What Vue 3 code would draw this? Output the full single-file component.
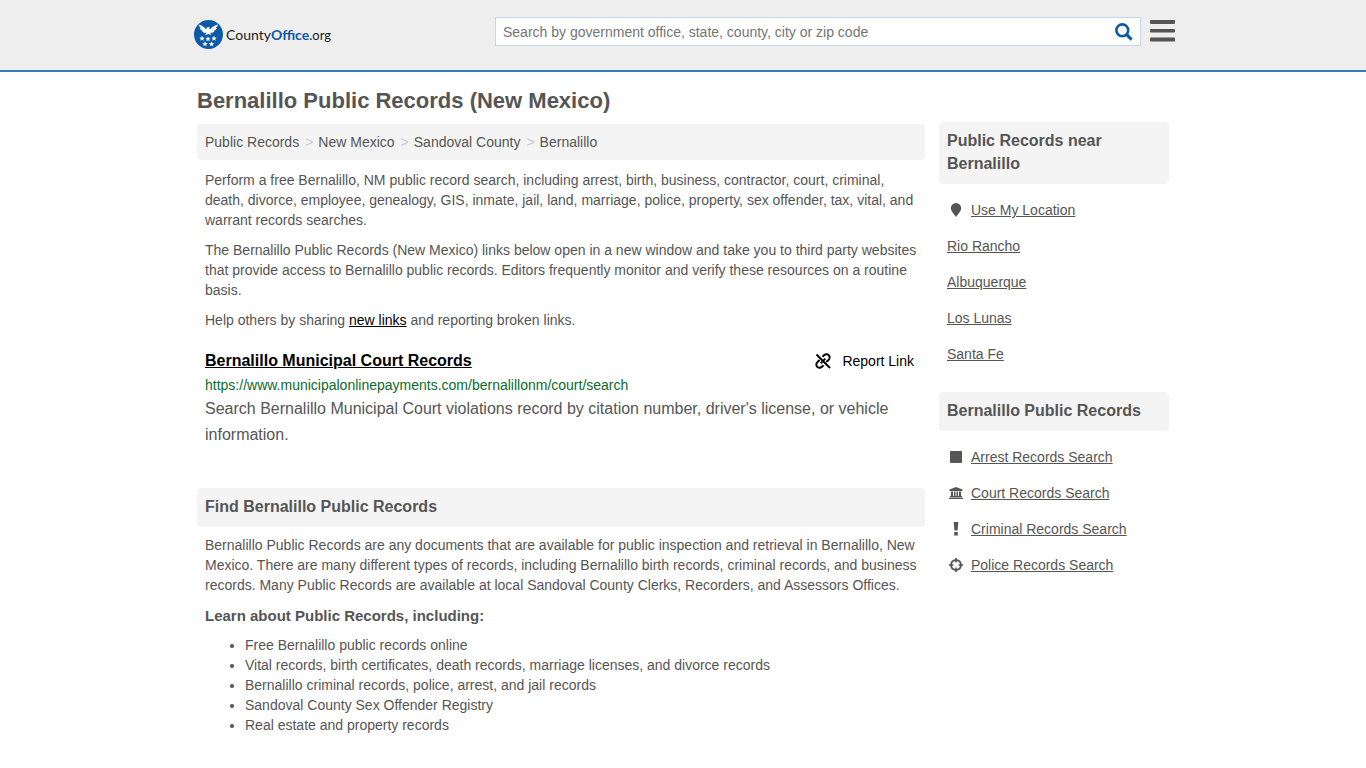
<template>
    <div class="page">
        <header class="site-header">
            <div class="header-inner">
                <a href="#" class="logo">
                    <svg class="logo-mark" viewBox="0 0 58 58" aria-hidden="true">
                        <circle cx="29" cy="29" r="29" fill="#0c59a8" />
                        <path
                            d="M9 9C16 11 21 14 24 19L25 16L28 14L32 15L30 17L32 19C36 14 41 11 48 9C47 12 46 14 43 16L46 16C44 19 42 21 39 22L41 23C38 26 35 26 32 25L35 30L29 28L22 30L25 25C22 26 19 26 16 23L18 22C15 21 13 19 11 16L14 16C11 14 10 12 9 9Z"
                            fill="#fff"
                        />
                        <path v-for="star in stars" :key="star" :transform="star" d="M0-5.500L1.400-1.800L5.500-1.700L2.300.8L3.400 4.700L0 2.400L-3.400 4.700L-2.300.8L-5.500-1.700L-1.400-1.800Z" fill="#fff" />
                    </svg>
                    <span class="logo-text">County<b>Office</b><span class="logo-org">.org</span></span>
                </a>
                <form class="search" role="search" @submit.prevent>
                    <input v-model="query" type="text" class="search-input" aria-label="Search" placeholder="Search by government office, state, county, city or zip code" />
                    <button type="submit" class="search-button" aria-label="Search">
                        <svg viewBox="0 0 18 18" aria-hidden="true">
                            <circle cx="7.3" cy="7.3" r="5.9" fill="none" stroke="#0c59a8" stroke-width="2.6" />
                            <path d="M11.6 11.6L16.6 16.6" stroke="#0c59a8" stroke-width="3" />
                        </svg>
                    </button>
                </form>
                <button type="button" class="menu-button" aria-label="Menu">
                    <svg viewBox="0 0 25 22" aria-hidden="true">
                        <path d="M1 0H24Q25 0 25 1V3Q25 4 24 4H1Q0 4 0 3V1Q0 0 1 0ZM1 9H24Q25 9 25 10V11.500Q25 12.500 24 12.500H1Q0 12.500 0 11.500V10Q0 9 1 9ZM1 17.500H24Q25 17.500 25 18.500V20.500Q25 21.500 24 21.500H1Q0 21.500 0 20.500V18.500Q0 17.500 1 17.500Z" fill="#555" />
                    </svg>
                </button>
            </div>
        </header>

        <div class="content">
            <main class="main">
                <h1>Bernalillo Public Records (New Mexico)</h1>
                <nav class="breadcrumb" aria-label="Breadcrumb">
                    <ol>
                        <li v-for="crumb in crumbs" :key="crumb"><a href="#">{{ crumb }}</a></li>
                    </ol>
                </nav>

                <div class="text">
                    <p>Perform a free Bernalillo, NM public record search, including arrest, birth, business, contractor, court, criminal, death, divorce, employee, genealogy, GIS, inmate, jail, land, marriage, police, property, sex offender, tax, vital, and warrant records searches.</p>
                    <p>The Bernalillo Public Records (New Mexico) links below open in a new window and take you to third party websites that provide access to Bernalillo public records. Editors frequently monitor and verify these resources on a routine basis.</p>
                    <p>Help others by sharing <a href="#" class="dark-link">new links</a> and reporting broken links.</p>
                </div>

                <article class="result">
                    <div class="result-top">
                        <a href="#" class="result-title">Bernalillo Municipal Court Records</a>
                        <button type="button" class="report">
                            <svg viewBox="0 0 16 16" aria-hidden="true">
                                <g fill="none" stroke="#000" stroke-width="1.900">
                                    <path d="M1.500 1.500L15 15" />
                                    <path d="M7.500 3.700L9 2.300C11 .6 13.300 1.200 14.200 2.800C15 4.300 14.600 5.900 13.500 7L11.300 9" />
                                    <path d="M10.300 5.700L5.700 10.300" />
                                    <path d="M8.500 12.300L7 13.700C5 15.400 2.700 14.800 1.800 13.200C1 11.700 1.400 10.100 2.500 9L4.700 7" />
                                </g>
                            </svg>
                            Report Link
                        </button>
                    </div>
                    <div class="result-url">https://www.municipalonlinepayments.com/bernalillonm/court/search</div>
                    <p class="result-desc">Search Bernalillo Municipal Court violations record by citation number, driver's license, or vehicle information.</p>
                </article>

                <h2 class="box-heading">Find Bernalillo Public Records</h2>
                <div class="text">
                    <p>Bernalillo Public Records are any documents that are available for public inspection and retrieval in Bernalillo, New Mexico. There are many different types of records, including Bernalillo birth records, criminal records, and business records. Many Public Records are available at local Sandoval County Clerks, Recorders, and Assessors Offices.</p>
                    <h3>Learn about Public Records, including:</h3>
                    <ul>
                        <li v-for="topic in topics" :key="topic">{{ topic }}</li>
                    </ul>
                </div>
            </main>

            <aside class="sidebar">
                <section>
                    <h2 class="box-heading">Public Records near Bernalillo</h2>
                    <ul class="side-list">
                        <li>
                            <svg viewBox="0 0 18 18" aria-hidden="true">
                                <path d="M9 2A5.200 5.200 0 0 1 14.200 7.200C14.200 9.700 12 12 9 16C6 12 3.800 9.700 3.800 7.200A5.200 5.200 0 0 1 9 2Z" fill="#555" />
                            </svg>
                            <a href="#">Use My Location</a>
                        </li>
                        <li v-for="city in cities" :key="city"><a href="#">{{ city }}</a></li>
                    </ul>
                </section>
                <section>
                    <h2 class="box-heading">Bernalillo Public Records</h2>
                    <ul class="side-list">
                        <li v-for="item in searches" :key="item.name">
                            <svg viewBox="0 0 18 18" aria-hidden="true">
                                <path :d="item.icon" fill="#555" fill-rule="evenodd" />
                            </svg>
                            <a href="#">{{ item.name }}</a>
                        </li>
                    </ul>
                </section>
            </aside>
        </div>
    </div>
</template>

<script setup>
import { ref } from 'vue';

const query = ref('');

const stars = [
    'translate(16 37)',
    'translate(28 38)',
    'translate(40 37)',
    'translate(22 48)',
    'translate(35 48)',
];

const crumbs = ['Public Records', 'New Mexico', 'Sandoval County', 'Bernalillo'];

const topics = [
    'Free Bernalillo public records online',
    'Vital records, birth certificates, death records, marriage licenses, and divorce records',
    'Bernalillo criminal records, police, arrest, and jail records',
    'Sandoval County Sex Offender Registry',
    'Real estate and property records',
];

const cities = ['Rio Rancho', 'Albuquerque', 'Los Lunas', 'Santa Fe'];

const searches = [
    {
        name: 'Arrest Records Search',
        icon: 'M4 3H14Q15 3 15 4V14Q15 15 14 15H4Q3 15 3 14V4Q3 3 4 3Z',
    },
    {
        name: 'Court Records Search',
        icon: 'M9 3L15.500 5.500V7H2.500V5.500ZM4 7.500H6V12H4ZM7 7.500H8.500V12H7ZM9.500 7.500H11V12H9.500ZM12 7.500H14V12H12ZM3 12H15V13.200H3ZM2 13.700H16V15H2Z',
    },
    {
        name: 'Criminal Records Search',
        icon: 'M6.700 2H11.300L10.600 10.500H7.400ZM7.200 12H10.800V15.500H7.200Z',
    },
    {
        name: 'Police Records Search',
        icon: 'M8.200 2H9.800V3.200A5.900 5.900 0 0 1 14.800 8.200H16V9.800H14.800A5.900 5.900 0 0 1 9.800 14.800V16H8.200V14.800A5.900 5.900 0 0 1 3.200 9.800H2V8.200H3.200A5.900 5.900 0 0 1 8.200 3.200ZM8.200 4.900A4.200 4.200 0 0 0 4.900 8.200H6.500V9.800H4.900A4.200 4.200 0 0 0 8.200 13.100V11.500H9.800V13.100A4.200 4.200 0 0 0 13.100 9.800H11.500V8.200H13.100A4.200 4.200 0 0 0 9.800 4.900V6.500H8.200Z',
    },
];
</script>

<style>
body {
    margin: 0;
    background-color: #fff;
}
</style>

<style scoped>
.page {
    font-family: "Liberation Sans", Arial, sans-serif;
    font-size: 14px;
    line-height: 20px;
    color: #555;
}

.page * {
    box-sizing: border-box;
}

a {
    color: #555;
}

.site-header {
    padding: 17px 0 21px;
    background-color: #eee;
    border-bottom: 2px solid #337ab7;
}

.header-inner {
    display: flex;
    align-items: flex-start;
    max-width: 984px;
    margin: 0 auto;
    padding-left: 3px;
}

.logo {
    display: flex;
    align-items: center;
    gap: 3px;
    width: 301px;
    padding-top: 3px;
    text-decoration: none;
    color: #222;
}

.logo-mark {
    width: 29px;
    height: 29px;
}

.logo-text {
    font-family: Lato, sans-serif;
    font-size: 14px;
}

.logo-text b {
    color: #0c59a8;
}

.logo-text .logo-org {
    font-size: 13px;
}

.search {
    display: flex;
    flex: 1;
    height: 29px;
    background-color: #fff;
    border: 1px solid #c3d9ea;
}

.search-input {
    flex: 1;
    min-width: 0;
    padding: 0 7px;
    border: none;
    outline: none;
    background: none;
    font-family: inherit;
    font-size: 14px;
    color: #555;
}

.search-input::placeholder {
    color: #757575;
}

.search-button,
.menu-button,
.report {
    padding: 0;
    border: none;
    background: none;
    cursor: pointer;
}

.search-button {
    width: 32px;
}

.search-button svg {
    display: block;
    width: 18px;
    height: 18px;
    margin-left: 7px;
}

.menu-button {
    margin: 3px 0 0 9px;
}

.menu-button svg {
    display: block;
    width: 25px;
    height: 22px;
}

.content {
    display: flex;
    gap: 14px;
    max-width: 972px;
    margin: 0 auto;
    padding-top: 16px;
}

.main {
    flex: 1;
    min-width: 0;
}

h1 {
    margin: 0 0 10px;
    font-size: 22px;
    line-height: 26px;
}

.breadcrumb {
    padding: 8px;
    background-color: #f4f4f4;
    border-radius: 4px;
}

.breadcrumb ol {
    display: flex;
    margin: 0;
    padding: 0;
    list-style: none;
}

.breadcrumb a {
    text-decoration: none;
}

.breadcrumb li + li::before {
    content: ">";
    padding: 0 5px 0 6px;
    color: #ccc;
}

.text {
    padding: 0 8px;
}

.text p {
    margin: 10px 0;
}

.dark-link {
    color: #000;
}

.result {
    padding: 11px 8px 0;
    margin-bottom: 40px;
}

.result-top {
    display: flex;
    justify-content: space-between;
    align-items: center;
}

.result-title {
    font-size: 16px;
    font-weight: bold;
    color: #000;
}

.report {
    display: flex;
    align-items: center;
    gap: 11px;
    padding-right: 3px;
    font-family: inherit;
    font-size: 14px;
    line-height: 20px;
    color: #000;
}

.report svg {
    width: 16px;
    height: 16px;
}

.result-url {
    padding: 4px 0 1px;
    color: #0a6b2c;
}

.result-desc {
    margin: 0;
    font-size: 16px;
    line-height: 26px;
}

.box-heading {
    margin: 0;
    padding: 7px 8px 9px;
    background-color: #f4f4f4;
    border-radius: 4px;
    font-size: 16px;
    line-height: 23px;
}

.box-heading + .text {
    padding-top: 8px;
}

.box-heading + .text p {
    margin-top: 0;
}

h3 {
    margin: 0 0 9px;
    font-size: 15px;
    line-height: 21px;
}

.text ul {
    margin: 0;
    padding-left: 40px;
}

.sidebar {
    width: 230px;
    padding-top: 34px;
}

.sidebar section {
    margin-bottom: 20px;
}

.side-list {
    margin: 8px 0 0;
    padding: 0 8px;
    list-style: none;
}

.side-list li {
    display: flex;
    align-items: center;
    gap: 6px;
    padding: 8px 0;
}

.side-list svg {
    width: 18px;
    height: 18px;
}
</style>
